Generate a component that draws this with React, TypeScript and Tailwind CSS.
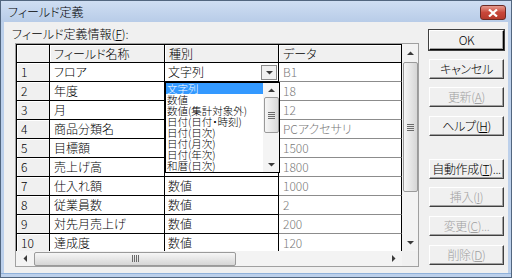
import React from "react";

const names = ["フロア", "年度", "月", "商品分類名", "目標額", "売上げ高", "仕入れ額", "従業員数", "対先月売上げ", "達成度"];
const values = ["B1", "18", "12", "PCアクセサリ", "1500", "1800", "1000", "2", "200", "120"];
// rows 2-6 sit under the open list, so their type text is not shown
const kinds = ["文字列", "", "", "", "", "", "数値", "数値", "数値", "数値"];
const options = ["文字列", "数値", "数値(集計対象外)", "日付(日付・時刻)", "日付(日次)", "日付(月次)", "日付(年次)", "和暦(日次)"];

const buttons = [
  { text: "OK", key: "", after: "", disabled: false, def: true, mt: "mt-0" },
  { text: "キャンセル", key: "", after: "", disabled: false, def: false, mt: "mt-[9px]" },
  { text: "更新(", key: "A", after: ")", disabled: true, def: false, mt: "mt-[8px]" },
  { text: "ヘルプ(", key: "H", after: ")", disabled: false, def: false, mt: "mt-[9px]" },
  { text: "自動作成(", key: "T", after: ")...", disabled: false, def: false, mt: "mt-[23px]" },
  { text: "挿入(", key: "I", after: ")", disabled: true, def: false, mt: "mt-[8px]" },
  { text: "変更(", key: "C", after: ")...", disabled: true, def: false, mt: "mt-[9px]" },
  { text: "削除(", key: "D", after: ")", disabled: true, def: false, mt: "mt-[9px]" },
];

const Arrow = ({ dir }: { dir: "up" | "down" | "left" | "right" }) => {
  const pts = {
    up: "0,4 7,4 3.5,0.5",
    down: "0,0 7,0 3.5,3.5",
    left: "4,0 4,7 0.5,3.5",
    right: "0,0 0,7 3.5,3.5",
  }[dir];
  const vertical = dir === "up" || dir === "down";
  return (
    <svg width={vertical ? 7 : 4} height={vertical ? 4 : 7} viewBox={vertical ? "0 0 7 4" : "0 0 4 7"}>
      <polygon points={pts} fill="#3a3a3a" />
    </svg>
  );
};

// gripper lines on the scroll thumbs
const Grip = ({ vertical }: { vertical: boolean }) =>
  vertical ? (
    <div className="flex flex-col gap-[1px]">
      <div className="w-[7px] h-[1px] bg-[#6b6b6b]" />
      <div className="w-[7px] h-[1px] bg-[#6b6b6b]" />
      <div className="w-[7px] h-[1px] bg-[#6b6b6b]" />
      <div className="w-[7px] h-[1px] bg-[#6b6b6b]" />
    </div>
  ) : (
    <div className="flex gap-[1px]">
      <div className="w-[1px] h-[7px] bg-[#6b6b6b]" />
      <div className="w-[1px] h-[7px] bg-[#6b6b6b]" />
      <div className="w-[1px] h-[7px] bg-[#6b6b6b]" />
      <div className="w-[1px] h-[7px] bg-[#6b6b6b]" />
    </div>
  );

const HeadCell = ({ w, children }: { w: string; children?: React.ReactNode }) => (
  <div className={`${w} h-full bg-[#f0f0f0] border-r border-b border-black shadow-[inset_1px_1px_0_#ffffff] pl-[4px] flex items-center`}>
    {children}
  </div>
);

const App = () => {
  return (
    <div className="w-[512px] h-[278px] bg-[#bcd0eb] border border-[#52667f] flex flex-col text-[12px] text-black font-light font-['Noto_Sans_CJK_JP','Noto_Sans',sans-serif] [font-feature-settings:'palt'] overflow-hidden">
      {/* Title bar */}
      <div className="h-[21px] shrink-0 bg-gradient-to-b from-[#cfdef2] to-[#b8cce8] flex items-center justify-between pl-[7px] pr-[5px]">
        <span className="leading-[14px] mt-[1px]">フィールド定義</span>
        <div className="w-[26px] h-[15px] mt-[2px] rounded-[3px] border border-[#6b2a24] bg-gradient-to-b from-[#e59a8f] via-[#c8473a] to-[#b63a2c] flex items-center justify-center">
          <svg width="10" height="8" viewBox="0 0 10 8">
            <path d="M1 0.5 L9 7.5 M9 0.5 L1 7.5" stroke="#ffffff" strokeWidth="2.2" />
          </svg>
        </div>
      </div>

      {/* Client area */}
      <div className="h-[251px] mx-[3px] bg-[#f0f0f0] flex">
        {/* left side */}
        <div className="w-[425px] pl-[8px] pt-[5px] flex flex-col">
          <div className="h-[14px] leading-[14px]">
            フィールド定義情報(<u>F</u>):
          </div>
          <div className="ml-[3px] mt-[2px] w-[404px] h-[224px] border border-[#a0a0a0] bg-white flex flex-col">
            <div className="h-[207px] flex">
              {/* cells */}
              <div className="relative w-[386px] h-full overflow-hidden border-l border-black">
                <div className="h-[19px] flex border-t border-black">
                  <HeadCell w="w-[33px]" />
                  <HeadCell w="w-[115px]">フィールド名称</HeadCell>
                  <HeadCell w="w-[114px]">種別</HeadCell>
                  <HeadCell w="w-[123px]">データ</HeadCell>
                </div>
                {names.map((n, i) => (
                  <div key={n} className="h-[19px] flex">
                    <div className="w-[33px] h-full bg-[#f0f0f0] border-r border-b border-black shadow-[inset_1px_1px_0_#ffffff] pl-[4px] flex items-center">
                      {i + 1}
                    </div>
                    <div className="w-[115px] h-full border-r border-b border-black pl-[4px] flex items-center">{n}</div>
                    <div className="relative w-[114px] h-full border-r border-b border-black pl-[3px] flex items-center">
                      {kinds[i]}
                      {i === 0 && (
                        <div className="absolute right-[1px] top-[2px] w-[16px] h-[15px] bg-[#f0f0f0] border border-[#8a8a8a] flex items-center justify-center">
                          <Arrow dir="down" />
                        </div>
                      )}
                    </div>
                    <div className="w-[123px] h-full border-r border-black border-b border-b-[#8c8c8c] pl-[4px] flex items-center text-[#7a7a7a]">
                      {values[i]}
                    </div>
                  </div>
                ))}

                {/* dropdown list of the type combo */}
                <div className="absolute left-[148px] top-[38px] w-[115px] h-[91px] bg-white border border-black flex">
                  <div className="w-[97px] text-[10.5px] leading-[11px]">
                    {options.map((o, i) => (
                      <div key={o} className={`h-[11px] pl-[1px] whitespace-nowrap ${i === 0 ? "bg-[#3399ff] text-white" : ""}`}>
                        {o}
                      </div>
                    ))}
                  </div>
                  <div className="w-[16px] h-full bg-[#f4f4f4] flex flex-col items-center">
                    <div className="h-[14px] w-full flex items-center justify-center">
                      <Arrow dir="up" />
                    </div>
                    <div className="w-[15px] h-[36px] rounded-[2px] border border-[#9a9a9a] bg-gradient-to-r from-[#f6f6f6] to-[#d9d9d9] flex items-center justify-center">
                      <Grip vertical />
                    </div>
                    <div className="flex-1" />
                    <div className="h-[14px] w-full flex items-center justify-center">
                      <Arrow dir="down" />
                    </div>
                  </div>
                </div>
              </div>

              {/* vertical scrollbar */}
              <div className="w-[16px] h-full bg-[#f3f3f3] flex flex-col items-center">
                <div className="h-[17px] w-full flex items-center justify-center">
                  <Arrow dir="up" />
                </div>
                <div className="mt-[1px] w-[15px] h-[130px] rounded-[2px] border border-[#9a9a9a] bg-gradient-to-r from-[#f6f6f6] to-[#d6d6d6] flex items-center justify-center">
                  <Grip vertical />
                </div>
                <div className="flex-1" />
                <div className="h-[17px] w-full flex items-center justify-center">
                  <Arrow dir="down" />
                </div>
              </div>
            </div>

            {/* horizontal scrollbar */}
            <div className="h-[15px] flex">
              <div className="w-[386px] h-full bg-[#f3f3f3] flex items-center">
                <div className="w-[17px] h-full flex items-center justify-center">
                  <Arrow dir="left" />
                </div>
                <div className="ml-[1px] w-[202px] h-[14px] rounded-[2px] border border-[#9a9a9a] bg-gradient-to-b from-[#f6f6f6] to-[#d6d6d6] flex items-center justify-center">
                  <Grip vertical={false} />
                </div>
                <div className="flex-1" />
                <div className="w-[17px] h-full flex items-center justify-center">
                  <Arrow dir="right" />
                </div>
              </div>
              <div className="w-[16px] h-full bg-[#f0f0f0]" />
            </div>
          </div>
        </div>

        {/* buttons */}
        <div className="w-[75px] pt-[8px] flex flex-col">
          {buttons.map((b) => (
            <div
              key={b.text}
              className={`${b.mt} h-[20px] flex items-center justify-center whitespace-nowrap tracking-[-0.3px] bg-[#f0f0f0] border border-t-white border-l-white ${
                b.def ? "border-r-black border-b-black outline outline-1 outline-[#404040]" : "border-r-[#404040] border-b-[#404040]"
              } shadow-[inset_-1px_-1px_0_#a0a0a0] leading-[14px] ${b.disabled ? "text-[#a0a0a0]" : "text-black"}`}
            >
              {b.text}
              {b.key && <u>{b.key}</u>}
              {b.after}
            </div>
          ))}
        </div>
      </div>

      {/* bottom frame */}
      <div className="flex-1 border-t border-[#8fb1db]" />
    </div>
  );
};

export default App;
